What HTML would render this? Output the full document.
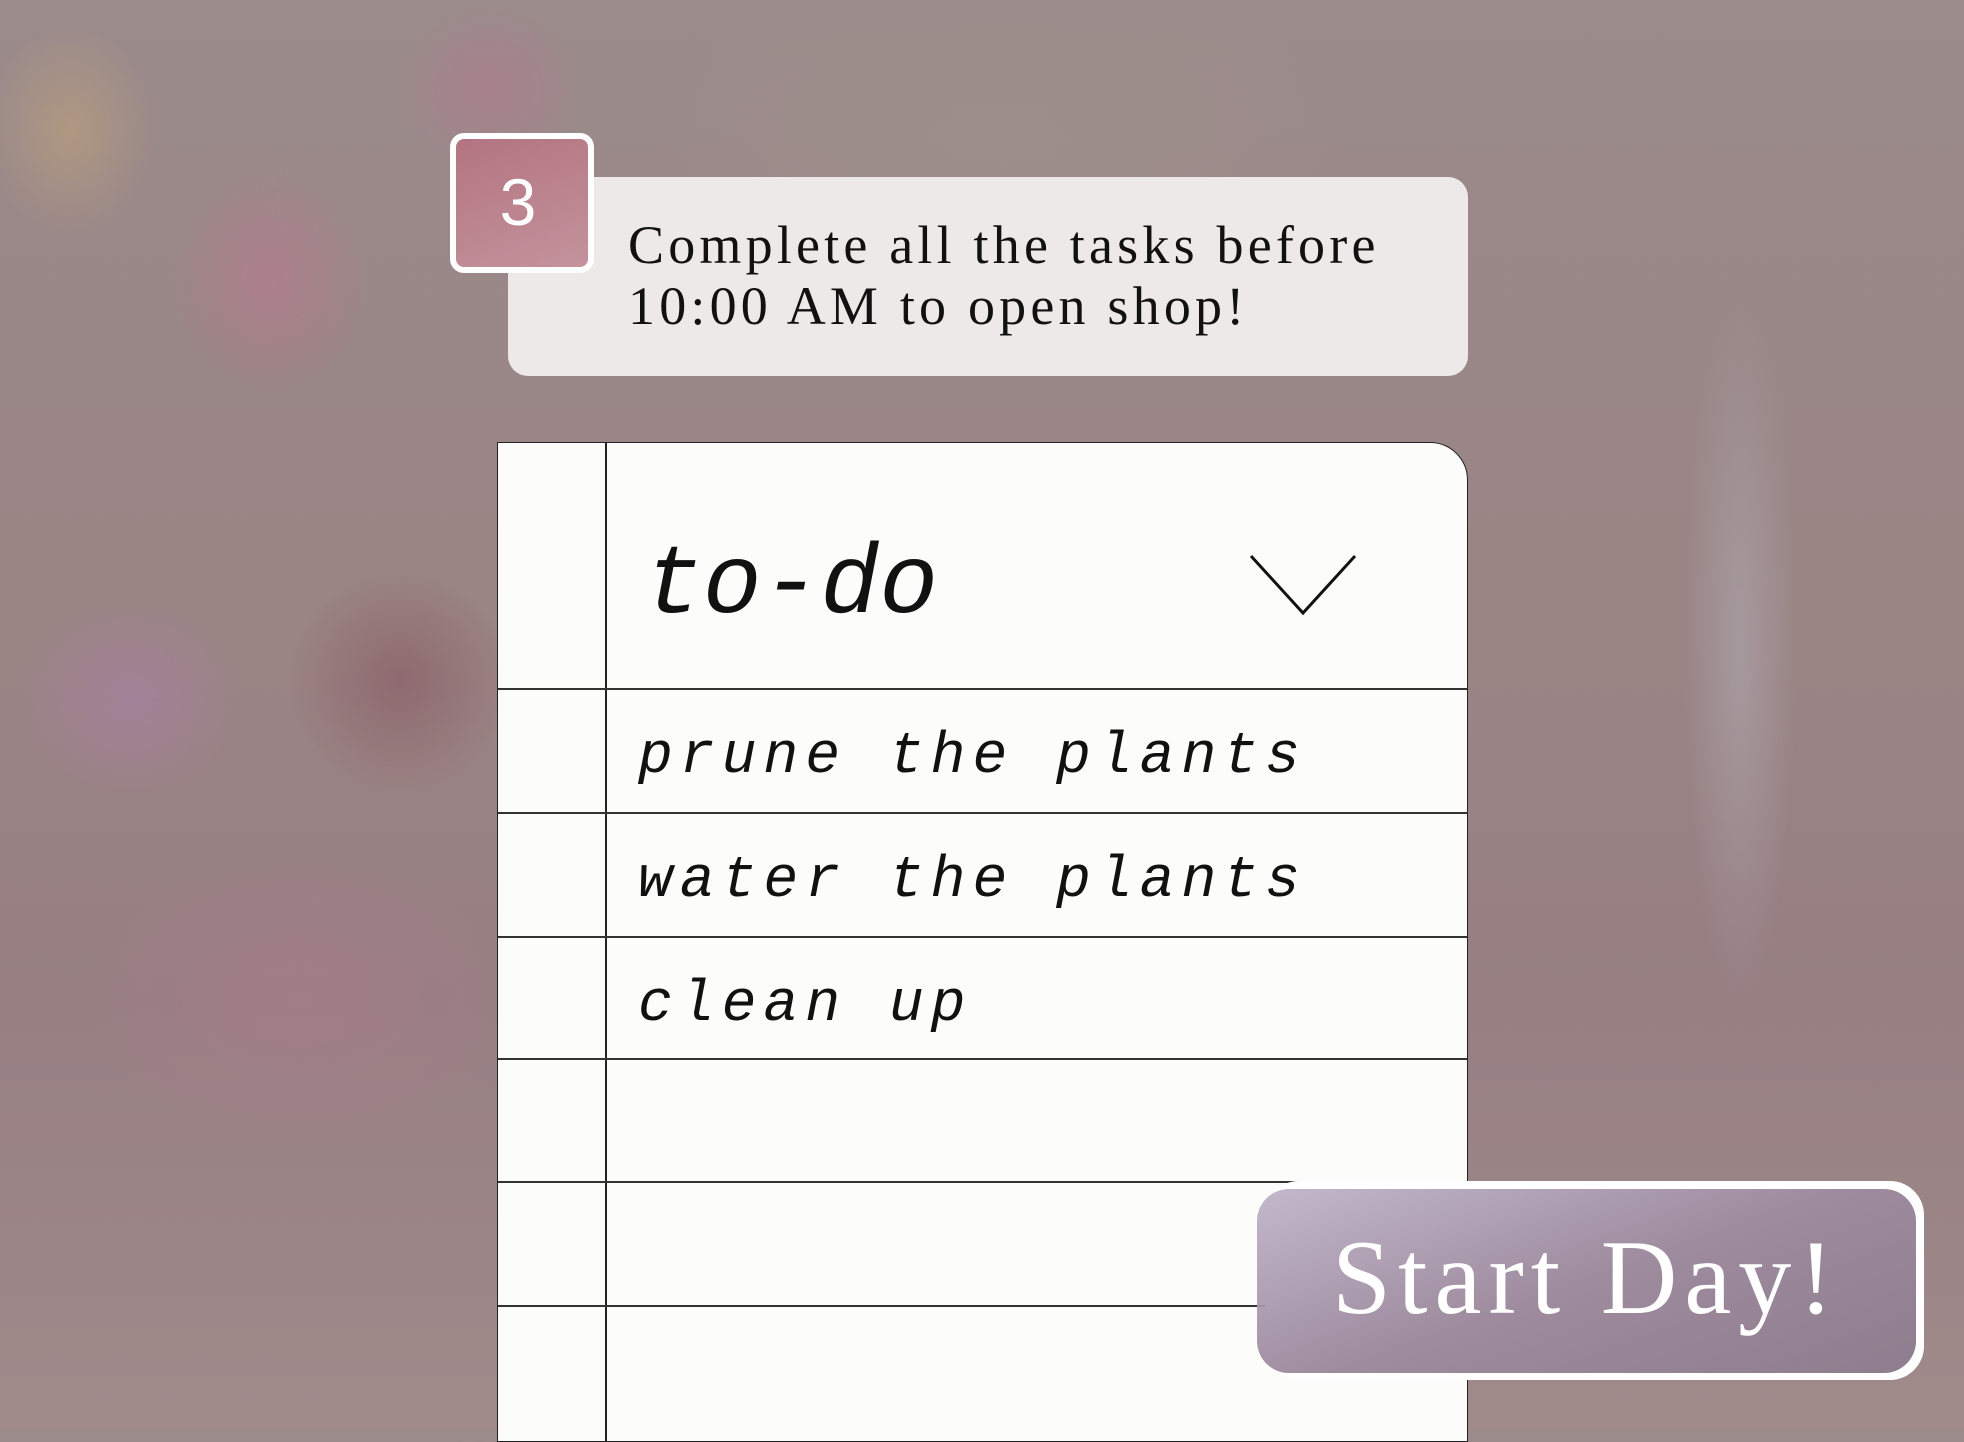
<!DOCTYPE html>
<html><head><meta charset="utf-8"><style>
*{margin:0;padding:0;box-sizing:border-box}
body{width:1964px;height:1429px;overflow:hidden;position:relative;font-family:"Liberation Serif",serif;
background:
radial-gradient(ellipse 140px 160px at 270px 280px,rgba(190,120,140,.55),transparent 70%),
radial-gradient(ellipse 130px 120px at 490px 90px,rgba(180,120,140,.5),transparent 70%),
radial-gradient(ellipse 120px 150px at 70px 130px,rgba(200,170,120,.45),transparent 70%),
radial-gradient(ellipse 160px 140px at 130px 700px,rgba(170,130,170,.55),transparent 70%),
radial-gradient(ellipse 160px 160px at 400px 680px,rgba(130,80,90,.5),transparent 70%),
radial-gradient(ellipse 300px 200px at 300px 1000px,rgba(180,120,140,.35),transparent 70%),
radial-gradient(ellipse 80px 500px at 1740px 650px,rgba(180,180,190,.45),transparent 70%),
radial-gradient(ellipse 500px 300px at 1000px 150px,rgba(160,150,140,.35),transparent 70%),
linear-gradient(180deg,#9b8b8b 0%,#9a8484 45%,#977f82 70%,#a08a8a 100%);}
.card{position:absolute;left:508px;top:177px;width:960px;height:199px;background:rgba(243,240,240,.93);border-radius:20px}
.card p{position:absolute;left:120px;top:38px;font-size:54px;line-height:61px;color:#111;letter-spacing:4.2px;white-space:nowrap}
.num{position:absolute;left:450px;top:133px;width:144px;height:140px;border:6px solid #fff;border-radius:14px;background:linear-gradient(160deg,#b27480,#c4939d);color:#fff;font-family:"Liberation Sans",sans-serif;font-size:66px;text-align:center;line-height:126px;padding-right:8px}
.nb{position:absolute;left:497px;top:442px;width:971px;height:1000px;background:#fcfcfa;border:1.5px solid #222;border-top-right-radius:38px}
.margin{position:absolute;left:107px;top:0;width:1.5px;height:100%;background:#222}
.ln{position:absolute;left:0;width:100%;height:1.5px;background:#333}
.mono{font-family:"Liberation Mono",monospace;font-style:italic;color:#111;position:absolute;white-space:pre}
.btnw{position:absolute;left:1265px;top:1181px;width:659px;height:199px;background:#fff;border-radius:34px}
.btn{position:absolute;left:1257px;top:1189px;width:659px;height:184px;border-radius:32px;background:linear-gradient(160deg,rgba(190,178,200,.92),rgba(150,130,150,.92) 50%,rgba(135,118,135,.95));}
.btn span{position:absolute;left:75px;top:28px;font-size:106px;color:#fff;letter-spacing:7px}
</style></head><body>
<div class="card"><p>Complete all the tasks before<br>10:00 AM to open shop!</p></div>
<div class="num">3</div>
<div class="nb">
<div class="margin"></div>
<div class="ln" style="top:245px"></div>
<div class="ln" style="top:369px"></div>
<div class="ln" style="top:493px"></div>
<div class="ln" style="top:615px"></div>
<div class="ln" style="top:738px"></div>
<div class="ln" style="top:862px"></div>
<div class="mono" style="left:146px;top:88px;font-size:98px">to-do</div>
<svg style="position:absolute;left:750px;top:110px" width="110" height="66"><path d="M3 3 L55 60 L107 3" fill="none" stroke="#111" stroke-width="3"/></svg>
<div class="mono" style="left:140px;top:282px;font-size:58px;letter-spacing:7px">prune the plants</div>
<div class="mono" style="left:140px;top:406px;font-size:58px;letter-spacing:7px">water the plants</div>
<div class="mono" style="left:140px;top:530px;font-size:58px;letter-spacing:7px">clean up</div>
</div>
<div class="btnw"></div>
<div class="btn"><span>Start Day!</span></div>
</body></html>
